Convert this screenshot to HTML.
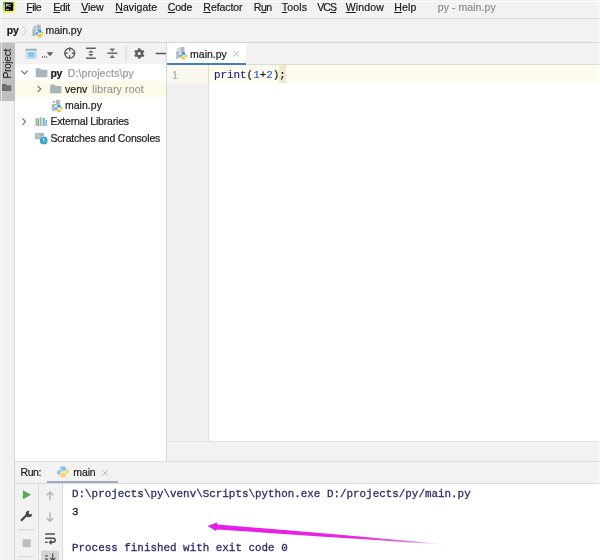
<!DOCTYPE html>
<html>
<head>
<meta charset="utf-8">
<title>py - main.py</title>
<style>
*{margin:0;padding:0;box-sizing:border-box;}
html,body{width:600px;height:560px;overflow:hidden;background:#fff;}
body{font-family:"Liberation Sans",sans-serif;font-size:10.5px;color:#111;position:relative;}
.a{position:absolute;}
.t{position:absolute;white-space:nowrap;line-height:14px;color:#1a1a1a;-webkit-text-stroke:0.2px;}
.m{position:absolute;white-space:nowrap;line-height:14px;font-family:"Liberation Mono",monospace;font-size:10.9px;-webkit-text-stroke:0.3px;}
u{text-decoration:underline;text-decoration-thickness:1px;text-underline-offset:0.9px;}
svg{position:absolute;overflow:visible;}
</style>
</head>
<body>
<!-- ===== chrome backgrounds ===== -->
<div class="a" style="left:0;top:0;width:600px;height:65px;background:#f2f2f2"></div>
<div class="a" style="left:0;top:18px;width:600px;height:1px;background:#dcdcdc"></div>
<div class="a" style="left:0;top:42px;width:600px;height:1px;background:#d6d6d6"></div>
<div class="a" style="left:0;top:64px;width:600px;height:1px;background:#dadada"></div>

<!-- left strip -->
<div class="a" style="left:0;top:43px;width:14px;height:517px;background:#f1f1f1"></div>
<div class="a" style="left:14px;top:43px;width:1px;height:517px;background:#d9d9d9"></div>
<div class="a" style="left:0;top:43px;width:15px;height:58px;background:#c0c0c0"></div>

<!-- project panel -->
<div class="a" style="left:15px;top:64px;width:151px;height:397px;background:#fff"></div>
<div class="a" style="left:15px;top:81px;width:151px;height:16px;background:#fdfbe8"></div>
<div class="a" style="left:166px;top:43px;width:1px;height:418px;background:#d8d8d8"></div>

<!-- editor -->
<div class="a" style="left:167px;top:43px;width:79px;height:20px;background:#fff"></div>
<div class="a" style="left:167px;top:62.5px;width:79px;height:2.5px;background:#3f7fc0"></div>
<div class="a" style="left:167px;top:65px;width:433px;height:376px;background:#fff"></div>
<div class="a" style="left:167px;top:65px;width:41px;height:376px;background:#f0f0f0"></div>
<div class="a" style="left:208px;top:65px;width:1px;height:376px;background:#dedede"></div>
<div class="a" style="left:167px;top:65px;width:41px;height:17.5px;background:#f9f7ee"></div>
<div class="a" style="left:209px;top:65px;width:391px;height:17.5px;background:#fcfbee"></div>
<div class="a" style="left:279.3px;top:65px;width:6.8px;height:17.5px;background:#f2e9cc"></div>
<div class="a" style="left:167px;top:441px;width:433px;height:20px;background:#f2f2f2"></div>
<div class="a" style="left:167px;top:441px;width:433px;height:1px;background:#e4e4e4"></div>

<!-- run panel -->
<div class="a" style="left:15px;top:461px;width:585px;height:22px;background:#f2f2f2"></div>
<div class="a" style="left:15px;top:461px;width:585px;height:1px;background:#d9d9d9"></div>
<div class="a" style="left:15px;top:482.5px;width:585px;height:1px;background:#dcdcdc"></div>
<div class="a" style="left:47px;top:480.7px;width:70.5px;height:2.4px;background:#a2a9c0"></div>
<div class="a" style="left:15px;top:483.5px;width:47px;height:77px;background:#f2f2f2"></div>
<div class="a" style="left:38px;top:483.5px;width:1px;height:77px;background:#dadada"></div>
<div class="a" style="left:61.5px;top:483.5px;width:1px;height:77px;background:#dadada"></div>
<div class="a" style="left:62.5px;top:483.5px;width:538px;height:77px;background:#fff"></div>
<div class="a" style="left:0;top:101px;width:14px;height:360px;background:#f1f1f1"></div>

<svg style="left:0;top:0;will-change:transform" width="600" height="560" viewBox="0 0 600 560">
<defs>
<linearGradient id="pcg" x1="0" y1="0" x2="1" y2="1"><stop offset="0" stop-color="#22b43a"/><stop offset="0.3" stop-color="#a8e34a"/><stop offset="0.6" stop-color="#e6f25a"/><stop offset="1" stop-color="#f5f56a"/></linearGradient>
<linearGradient id="arr" x1="0" y1="0" x2="1" y2="0"><stop offset="0" stop-color="#e81ee6"/><stop offset="0.6" stop-color="#e426e2"/><stop offset="0.85" stop-color="#d05ad0" stop-opacity=".8"/><stop offset="1" stop-color="#c070c0" stop-opacity="0"/></linearGradient>
<g id="folder"><path d="M1 13 H15 V4 H8 L6.7 2.7 C6.2 2.2 6 2 5.5 2 H1 Z" fill="#9aa7b0" fill-opacity=".85"/></g>
<g id="pyfile">
 <path d="M7 1 L3 5 H7 Z" fill="#9aa7b0" fill-opacity=".8"/>
 <path d="M8 1 V6 H3 V15 H6.5 V10 Q6.5 7 9.5 7 H13 V1 Z" fill="#9aa7b0" fill-opacity=".8"/>
 <path d="M11.4 7 C9.9 7 9.2 7.6 9.2 8.6 V9.6 H11.6 V10.1 H8.3 C7.3 10.1 6.8 10.8 6.8 11.8 C6.8 12.9 7.3 13.6 8.3 13.6 H9 V12.4 C9 11.5 9.7 10.8 10.6 10.8 H12.6 C13.3 10.8 13.8 10.3 13.8 9.6 V8.6 C13.8 7.6 12.9 7 11.4 7 Z" fill="#3d9be0"/>
 <path d="M11.7 16.2 C13.2 16.2 13.9 15.6 13.9 14.6 V13.6 H11.5 V13.1 H14.8 C15.8 13.1 16.3 12.4 16.3 11.4 C16.3 10.3 15.8 9.6 14.8 9.6 H14.1 V10.8 C14.1 11.7 13.4 12.4 12.5 12.4 H10.5 C9.8 12.4 9.3 12.9 9.3 13.6 V14.6 C9.3 15.6 10.2 16.2 11.7 16.2 Z" fill="#f5c327"/>
</g>
<g id="pylogo">
 <path d="M7.8 1 C5.3 1 4.2 2 4.2 3.6 V5.3 H8 V6 H2.8 C1.3 6 0.5 7.2 0.5 8.9 C0.5 10.6 1.3 11.8 2.8 11.8 H4 V9.8 C4 8.3 5.1 7.2 6.6 7.2 H9.8 C10.9 7.2 11.8 6.3 11.8 5.2 V3.6 C11.8 2 10.3 1 7.8 1 Z" fill="#8cc0ea"/>
 <path d="M8.2 15 C10.7 15 11.8 14 11.8 12.4 V10.7 H8 V10 H13.2 C14.7 10 15.5 8.8 15.5 7.1 C15.5 5.4 14.7 4.2 13.2 4.2 H12 V6.2 C12 7.7 10.9 8.8 9.4 8.8 H6.2 C5.1 8.8 4.2 9.7 4.2 10.8 V12.4 C4.2 14 5.7 15 8.2 15 Z" fill="#f7d66f"/>
</g>
</defs>

<!-- PyCharm logo -->
<rect x="2.9" y="0.9" width="12.3" height="11.9" rx="1.2" fill="url(#pcg)"/>
<rect x="5" y="2.6" width="8.2" height="8.2" fill="#050505"/>
<text x="5.7" y="6.7" font-size="4" font-weight="bold" fill="#fff" font-family="Liberation Sans, sans-serif">PC</text>
<rect x="5.9" y="8.9" width="3" height="0.8" fill="#fff"/>

<!-- nav bar -->
<path d="M22.8 26.3 L26.3 31 L22.8 35.7" stroke="#c2c2c2" stroke-width="0.9" fill="none"/>
<use href="#pyfile" transform="translate(30.0 23.8) scale(0.83)"/>

<!-- left strip: project folder icon -->
<text transform="translate(10.6 78.6) rotate(-90)" font-size="10.5" textLength="30" lengthAdjust="spacing" fill="#1a1a1a" font-family="Liberation Sans, sans-serif">Project</text>
<path d="M2 84 H6 L7 85.2 H11.3 V91 H2 Z" fill="#6e6e6e"/>

<!-- project toolbar -->
<rect x="26.2" y="49.3" width="9.8" height="9" fill="#eef3f7" stroke="#c3cad1" stroke-width="1"/>
<rect x="25.7" y="48.8" width="10.8" height="2" fill="#a7b1ba"/>
<rect x="27.7" y="52" width="7" height="5.3" fill="#7fcaee"/>
<g fill="#444"><circle cx="42.5" cy="57" r=".65"/><circle cx="44.6" cy="57" r=".65"/><circle cx="46.7" cy="57" r=".65"/></g>
<path d="M46.8 52.2 H53.2 L50 56.2 Z" fill="#5a5a5a"/>
<g stroke="#606060" stroke-width="1.4" fill="none">
 <circle cx="69.7" cy="53.2" r="4.9"/>
 <path d="M69.7 47.6 V51.2 M69.7 55.2 V58.8 M64.1 53.2 H67.7 M71.7 53.2 H75.3"/>
 <path d="M86 48.3 H95.8 M86 58.2 H95.8"/>
 <path d="M107.4 53.2 H117.2"/>
</g>
<g fill="#6a6a6a">
 <path d="M90.9 50.2 L93.6 52.8 H88.2 Z"/>
 <path d="M90.9 56.6 L93.6 54 H88.2 Z"/>
 <path d="M112.3 51.8 L115 48.6 H109.6 Z"/>
 <path d="M112.3 54.7 L115 57.9 H109.6 Z"/>
</g>
<rect x="125.6" y="45.7" width="1" height="16" fill="#d8d8d8"/>
<!-- gear -->
<g transform="translate(139.3 53.5)">
 <g fill="#5f5f5f">
  <rect x="-1.1" y="-5.3" width="2.2" height="10.6"/>
  <rect x="-1.1" y="-5.3" width="2.2" height="10.6" transform="rotate(60)"/>
  <rect x="-1.1" y="-5.3" width="2.2" height="10.6" transform="rotate(120)"/>
  <circle r="4"/>
 </g>
 <circle r="1.55" fill="#f2f2f2"/>
</g>
<rect x="155.7" y="52.75" width="10.1" height="1.5" fill="#5a5a5a"/>

<!-- tree -->
<g stroke="#6e6e6e" stroke-width="1.1" fill="none">
 <path d="M21.4 70.7 L24.5 73.9 L27.6 70.7"/>
 <path d="M37.6 85.8 L40.8 89 L37.6 92.2"/>
 <path d="M22.4 118.4 L25.6 121.6 L22.4 124.8"/>
</g>
<use href="#folder" transform="translate(34.9 66.5) scale(0.83)"/>
<use href="#folder" transform="translate(49.4 82.9) scale(0.80)"/>
<use href="#pyfile" transform="translate(49.3 98.9) scale(0.83)"/>
<!-- external libraries -->
<rect x="35.5" y="118.3" width="1.6" height="7.7" fill="#a8b0bd"/>
<rect x="37.6" y="118.3" width="1.6" height="7.7" fill="#62b543"/>
<rect x="40" y="117.3" width="1.6" height="8.7" fill="#a8b0bd"/>
<rect x="42.8" y="118" width="1.8" height="8" fill="#40b6e0"/>
<rect x="45.3" y="120" width="1.9" height="6" fill="#a8b0bd"/>
<!-- scratches -->
<rect x="35.2" y="133" width="8.8" height="6.2" fill="#a9b1ba"/>
<path d="M37 134.3 L39.3 136 L37 137.7" stroke="#e8eaec" stroke-width=".9" fill="none"/>
<circle cx="43.7" cy="140.4" r="4.3" fill="#fff"/>
<circle cx="43.7" cy="140.4" r="3.9" fill="#35a5cf"/>
<path d="M43.6 138.2 V140.6 L44.9 142" stroke="#fff" stroke-width=".9" fill="none"/>

<!-- editor tab -->
<use href="#pyfile" transform="translate(173.7 46.2) scale(0.83)"/>
<path d="M233.6 51 L239 56.4 M239 51 L233.6 56.4" stroke="#b4b4b4" stroke-width="0.9"/>

<!-- run header -->
<use href="#pylogo" transform="translate(56.8 465.5) scale(0.79)"/>
<path d="M102.2 470.3 L107.8 475.9 M107.8 470.3 L102.2 475.9" stroke="#b4b4b4" stroke-width="0.9"/>

<!-- run toolbar -->
<path d="M22.9 490.3 V499.3 L31.1 494.8 Z" fill="#57a857"/>
<g transform="translate(26.8 516)">
 <path d="M-5.2 4.1 L0.6 -1.7" stroke="#4a4a4a" stroke-width="2.2" stroke-linecap="round" fill="none"/>
 <path d="M2.6 -5.3 A3.3 3.3 0 1 0 5.4 -2.2 L3.3 -1.5 L1.8 -3 Z" fill="#4a4a4a"/>
</g>
<rect x="18.6" y="529.2" width="15.7" height="1" fill="#d4d4d4"/>
<rect x="22.6" y="539.3" width="8.1" height="7.8" fill="#bebebe"/>
<rect x="18.6" y="556.2" width="15.7" height="1" fill="#d4d4d4"/>
<g stroke="#b4b4b4" stroke-width="1.4" fill="none">
 <path d="M50 492 V500.3 M46.7 495.2 L50 491.9 L53.3 495.2"/>
 <path d="M50 512.6 V521 M46.7 518 L50 521.3 L53.3 518"/>
</g>
<g stroke="#4a4a4a" stroke-width="1.45" fill="none">
 <path d="M45.1 534 H54.9"/>
 <path d="M45.1 538.3 H53.2 A2 2 0 0 1 53.2 542.3 H50.4"/>
 <path d="M45.1 542.3 H47.6"/>
 <path d="M51.6 540.4 L49.6 542.3 L51.6 544.2"/>
</g>
<rect x="41.2" y="550.6" width="17.8" height="14" rx="2" fill="#d3d3d3"/>
<g stroke="#4a4a4a" stroke-width="1.2" fill="none">
 <path d="M45.2 555.9 H47.8 M45.2 559.1 H47.8"/>
 <path d="M52.7 553.4 V561"/>
 <path d="M50 557.8 L52.7 560.5 L55.4 557.8"/>
</g>

<!-- magenta arrow -->
<path d="M207.6 526 L217 522.4 L217.3 524.6 L320 533.0 L360 536.5 L410 541 L447 544.6 L410 542.5 L360 539.1 L320 536.5 L216.8 529.4 L216 530.9 Z" fill="url(#arr)"/>
</svg>

<div class="a" style="left:0;top:1px;width:600px;height:1px;background:rgba(255,255,255,.75)"></div>
<div class="a" style="left:1px;top:0;width:1px;height:560px;background:rgba(255,255,255,.6)"></div>
<div class="a" style="left:598px;top:0;width:2px;height:560px;background:rgba(255,255,255,.35)"></div>

<!-- ===== texts ===== -->
<div class="a" style="left:0;top:0;width:600px;height:560px;will-change:transform">
<div class="t" style="left:26.27px;top:-0.39px;font-size:10.5px;letter-spacing:-0.521px;"><u>F</u>ile</div>
<div class="t" style="left:53.27px;top:-0.39px;font-size:10.5px;letter-spacing:-0.439px;"><u>E</u>dit</div>
<div class="t" style="left:81.17px;top:-0.39px;font-size:10.5px;letter-spacing:-0.010px;"><u>V</u>iew</div>
<div class="t" style="left:115.37px;top:-0.39px;font-size:10.5px;letter-spacing:0.038px;"><u>N</u>avigate</div>
<div class="t" style="left:167.77px;top:-0.39px;font-size:10.5px;letter-spacing:-0.192px;"><u>C</u>ode</div>
<div class="t" style="left:203.37px;top:-0.39px;font-size:10.5px;letter-spacing:-0.069px;"><u>R</u>efactor</div>
<div class="t" style="left:253.77px;top:-0.39px;font-size:10.5px;letter-spacing:-0.442px;">R<u>u</u>n</div>
<div class="t" style="left:281.77px;top:-0.39px;font-size:10.5px;letter-spacing:0.168px;"><u>T</u>ools</div>
<div class="t" style="left:317.17px;top:-0.39px;font-size:10.5px;letter-spacing:-0.885px;">VC<u>S</u></div>
<div class="t" style="left:345.77px;top:-0.39px;font-size:10.5px;letter-spacing:0.166px;"><u>W</u>indow</div>
<div class="t" style="left:394.17px;top:-0.39px;font-size:10.5px;letter-spacing:0.186px;"><u>H</u>elp</div>
<div class="t" style="left:437.77px;top:-0.39px;font-size:10.5px;letter-spacing:0.064px;color:#8c8c8c">py - main.py</div>
<div class="t" style="left:6.77px;top:22.86px;font-size:10.5px;letter-spacing:-0.055px;font-weight:bold">py</div>
<div class="t" style="left:45.57px;top:22.86px;font-size:10.5px;letter-spacing:-0.073px;">main.py</div>
<div class="t" style="left:50.47px;top:65.56px;font-size:10.5px;letter-spacing:-0.405px;font-weight:bold">py</div>
<div class="t" style="left:67.77px;top:65.56px;font-size:10.5px;letter-spacing:0.132px;color:#999">D:\projects\py</div>
<div class="t" style="left:64.97px;top:81.96px;font-size:10.5px;letter-spacing:0.067px;">venv</div>
<div class="t" style="left:92.37px;top:81.96px;font-size:10.5px;letter-spacing:0.154px;color:#999">library root</div>
<div class="t" style="left:64.97px;top:97.86px;font-size:10.5px;letter-spacing:0.027px;">main.py</div>
<div class="t" style="left:50.47px;top:114.36px;font-size:10.5px;letter-spacing:-0.180px;">External Libraries</div>
<div class="t" style="left:50.47px;top:130.66px;font-size:10.5px;letter-spacing:-0.190px;">Scratches and Consoles</div>
<div class="t" style="left:190.07px;top:46.86px;font-size:10.5px;letter-spacing:-0.002px;">main.py</div>
<div class="t" style="left:172.27px;top:67.66px;font-size:10.5px;letter-spacing:-1.289px;color:#adadad">1</div>
<div class="t" style="left:20.57px;top:465.36px;font-size:10.5px;letter-spacing:-0.458px;">Run:</div>
<div class="t" style="left:73.37px;top:465.36px;font-size:10.5px;letter-spacing:-0.153px;">main</div>

<div class="m" style="left:213.9px;top:67.6px;-webkit-text-stroke:0.15px"><span style="color:#1a1a7a">print</span>(<span style="color:#2455e6">1</span>+<span style="color:#2455e6">2</span>);</div>
<div class="m" style="left:72px;top:486.9px;color:#2e2e6e">D:\projects\py\venv\Scripts\python.exe D:/projects/py/main.py</div>
<div class="m" style="left:72px;top:504.6px;color:#1a1a1a">3</div>
<div class="m" style="left:72px;top:540.5px;color:#2e2e6e">Process finished with exit code 0</div>
</div>
</body>
</html>
